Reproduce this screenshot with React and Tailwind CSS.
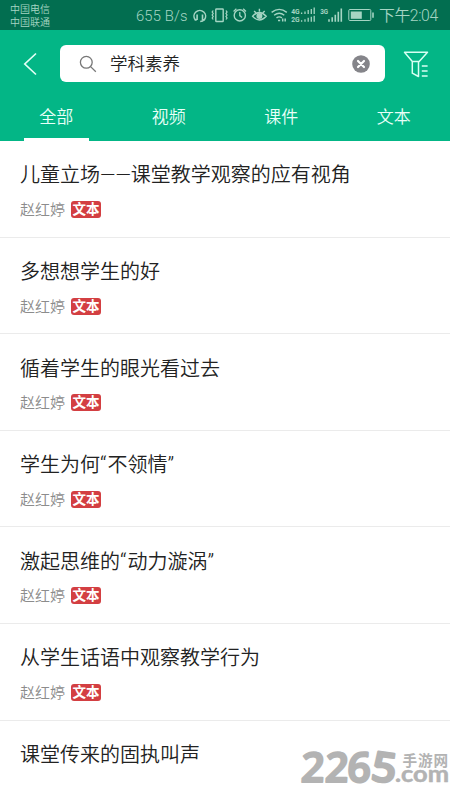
const articles = [
  '儿童立场——课堂教学观察的应有视角',
  '多想想学生的好',
  '循着学生的眼光看过去',
  '学生为何“不领情”',
  '激起思维的“动力漩涡”',
  '从学生话语中观察教学行为',
  '课堂传来的固执叫声',
];
const tabs = ['全部', '视频', '课件', '文本'];

// Curly quotes get slightly more room than the surrounding characters.
function Title({ text }) {
  return text.split(/([“”])/).map((part, i) =>
    part === '“' || part === '”' ? (
      <span key={i} className="text-[22px] leading-none tracking-[1px]">{part}</span>
    ) : (
      part
    ),
  );
}

function StatusIcons() {
  return (
    <svg width="182" height="30" viewBox="190 0 182 30" fill="none" stroke="#a5d5c3" strokeWidth="1.4" className="shrink-0 overflow-visible">
      <path d="M196.7 19.9h-1.4a5.8 5.8 0 1 1 9 0h-1.4M197.1 14.5v5.4M202.5 14.5v5.4M204 19.7q-1 1.8-3.8 1.8" strokeWidth="1.6" />
      <rect x="215.8" y="9" width="7.4" height="12.5" rx=".6" />
      <path d="M213.2 10.5l-1 1.5 1 1.5-1 1.5 1 1.5-1 1.5 1 1.5M226 10.5l1 1.5-1 1.5 1 1.5-1 1.5 1 1.5-1 1.5" strokeWidth="1.3" />
      <circle cx="239.8" cy="15.4" r="5.6" />
      <path d="M239.8 12v3.6l2.3 2M233.6 11.4l2.8-2.6M246 11.4l-2.8-2.6" strokeWidth="1.3" />
      <path d="M252.6 16.2q6.7-7.5 13.6 0q-6.9 7.5-13.6 0zM254.1 11l1.8 1.8M259.4 8.8v2.7M264.7 11l-1.8 1.8" strokeWidth="1.4" />
      <circle cx="259.4" cy="16" r="2.3" fill="#a5d5c3" />
      <path d="M271.6 12.4q7.7-6 15.2 0M274.1 15.2q5.1-4 10.2 0M276.5 17.9q2.8-2.1 5.4 0" />
      <path d="M278 20.4h2.2M282.7 18.5v3M285.2 18.5v3" strokeWidth="1.5" />
      <g fill="#a5d5c3" stroke="none" fontFamily="Roboto, sans-serif" fontWeight="700" fontSize="8">
        <text x="291.2" y="13.8" textLength="8.5" lengthAdjust="spacingAndGlyphs">4G</text>
        <text x="291.2" y="22" textLength="8.5" lengthAdjust="spacingAndGlyphs">2G</text>
        <text x="320.2" y="13.8" textLength="8" lengthAdjust="spacingAndGlyphs">3G</text>
      </g>
      <path d="M301.6 14v-1.5M305 14v-2.5M308.2 14v-4M311.3 14v-5M314.2 14v-6.5M301.6 21.8v-1.5M305 21.8v-2.5M308.2 21.8v-4M311.3 21.8v-5M314.2 21.8v-6" strokeWidth="1.3" />
      <path d="M329 21.8v-2.5M332.2 21.8v-4.5M335.3 21.8v-7M338.3 21.8v-10M341.3 21.8V8.5" strokeWidth="1.6" />
      <rect x="348.8" y="9.5" width="22" height="11" rx="1" strokeWidth="1" />
      <path d="M373 12.4v5.4" strokeWidth="1.6" />
      <rect x="350.8" y="11.5" width="11" height="7.3" fill="#a5d5c3" stroke="none" />
    </svg>
  );
}

function Watermark() {
  return (
    <svg className="absolute left-[296px] top-[735px] overflow-visible" width="154" height="65" viewBox="296 735 154 65" fill="#b3b3b3" stroke="#b3b3b3" strokeLinejoin="round">
      <g fontFamily="'Open Sans', sans-serif" fontWeight="600" fontSize="41" strokeWidth="2.2">
        <text x="0" y="0" transform="translate(300.5 781.5) skewX(-3)">2</text>
        <text x="0" y="0" transform="translate(324.5 781.5) skewX(-3)">2</text>
        <text x="0" y="0" transform="translate(347 781.5) skewX(-2)">6</text>
        <text x="0" y="0" transform="translate(370 780) rotate(8) scale(1.06 1)">5</text>
      </g>
      <text x="402.5" y="766.4" fontFamily="'Noto Sans CJK SC', sans-serif" fontWeight="700" fontSize="14.6" textLength="45.5" stroke="none">手游网</text>
      <text x="395" y="782" fontFamily="Lato, sans-serif" fontWeight="700" fontSize="22" textLength="54" lengthAdjust="spacingAndGlyphs" strokeWidth=".5">.com</text>
    </svg>
  );
}

export default function App() {
  return (
    <div className="relative flex h-[800px] w-[450px] flex-col overflow-hidden bg-white font-[Roboto,'Noto_Sans_CJK_SC',sans-serif]">
      <div className="flex h-[30px] shrink-0 items-center bg-[#026e50] text-[#a5d5c3]">
        <div className="w-[136px] shrink-0 pl-[10px] pt-[2px] text-[10px] font-[350] leading-[13.5px]">
          <div>中国电信</div>
          <div>中国联通</div>
        </div>
        <div className="w-[54px] shrink-0 whitespace-nowrap pt-[2px] text-[14.8px] font-[350] leading-[28px] tracking-[0.15px]">655 B/s</div>
        <StatusIcons />
        <div className="ml-[7px] whitespace-nowrap pt-[2px] text-[15.8px] font-[350] leading-[28px] tracking-[-0.4px]">下午2:04</div>
      </div>
      <header className="flex h-[111px] shrink-0 flex-col bg-[#03b686]">
        <div className="flex h-[61px] items-end pb-[9px]">
          <svg className="mb-[5px] ml-[22px] shrink-0" width="38" height="26" viewBox="22 50 38 26" fill="none" stroke="#e2fff5" strokeWidth="1.7">
            <path d="M36 52.5L24.8 63L36 73.5" />
          </svg>
          <div className="flex h-[37px] w-[325px] items-center rounded-[6px] bg-white">
            <svg className="ml-[19px]" width="18" height="18" viewBox="0 0 18 18" fill="none" stroke="#777" strokeWidth="1.3">
              <circle cx="7.3" cy="7.3" r="5.9" />
              <path d="M11.6 11.6L16.8 16.8" />
            </svg>
            <span className="ml-[13px] flex-1 pt-[2px] text-[17.5px] font-[350] leading-[35px] text-[#222]">学科素养</span>
            <svg className="mr-[15px]" width="18" height="18" viewBox="0 0 18 18">
              <circle cx="9" cy="9" r="8.8" fill="#85858a" />
              <path d="M6 6l6 6M12 6l-6 6" stroke="white" strokeWidth="2.2" strokeLinecap="round" />
            </svg>
          </div>
          <svg className="mb-[4px] ml-[18px]" width="27" height="28" viewBox="403 49 27 28" fill="none" stroke="#d8fff3" strokeWidth="1.5" strokeLinejoin="round">
            <path d="M404.5 51.3h23l-8.3 9.2h-6.9zM412.3 60.5v11.7l6.2 3.3v-15M421.8 65h5.8M421.8 70h5.8M421.8 75h5.8" />
          </svg>
        </div>
        <nav className="grid h-[50px] grid-cols-4 text-center text-[17px] font-[350] leading-[53px] text-[#e8fff8]">
          {tabs.map((t, i) => (
            <div key={t} className="flex flex-col items-center">
              <span className="h-[47px]">{t}</span>
              {i === 0 && <span className="h-[3px] w-[65px] bg-white" />}
            </div>
          ))}
        </nav>
      </header>
      <main className="flex flex-col">
        {articles.map((t, i) => (
          <article key={t} className="flex h-[96.6px] shrink-0 flex-col border-b border-[#ebebeb] pl-[20px] pt-[19.4px]">
            <h2 className="h-[30px] whitespace-nowrap text-[20px] font-[350] leading-[30px] text-[#222]">
              <Title text={t} />
            </h2>
            {i < 6 && (
              <div className="mt-[9.6px] flex h-[20px] items-center">
                <span className="pt-px text-[15px] font-[350] leading-[21px] text-[#8c8c8c]">赵红婷</span>
                <span className="mb-px ml-[6px] h-[17px] w-[30px] rounded-[3px] bg-[#d33f42] text-center text-[13.5px] font-bold leading-[17px] text-white">文本</span>
              </div>
            )}
          </article>
        ))}
      </main>
      <Watermark />
    </div>
  );
}
